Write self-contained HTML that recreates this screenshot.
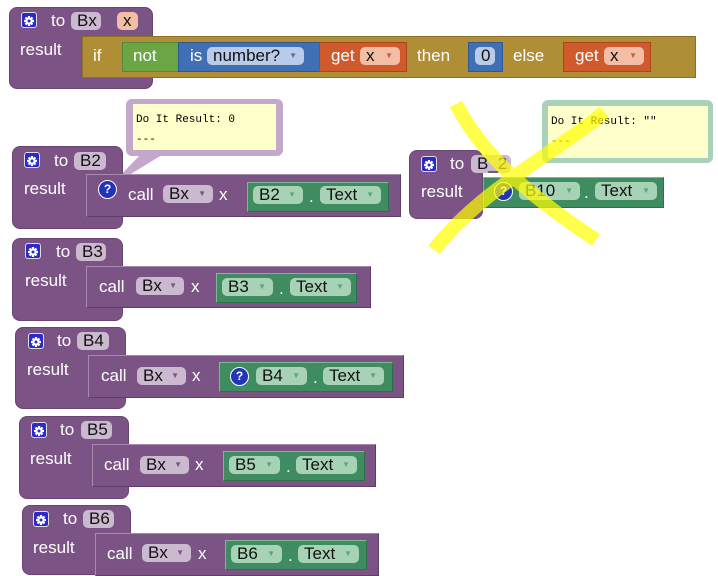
<!DOCTYPE html>
<html><head><meta charset="utf-8"><style>
body{margin:0;width:718px;height:562px;background:#fff;position:relative;overflow:hidden;font-family:"Liberation Sans",sans-serif;font-size:17px;color:#fff}
div{position:absolute;box-sizing:border-box}
.pu{background:#7c5385;border:1px solid #6a4574}
.pr{border-radius:8px}
.call{background:#7c5385;border:1px solid #a78aad;border-right-color:#5e3d66;border-bottom-color:#5e3d66}
.gr{background:#3f8c60;border:1px solid #2f6e4a;border-top-color:#7cb894;border-left-color:#7cb894}
.t{line-height:18px;white-space:nowrap}
.p{border-radius:5px;color:#111;line-height:18px;padding-left:6px;white-space:nowrap}
.pl{background:#cbb9cf}
.pg{background:#a8d2b6}
.po{background:#f2bea6}
.pb{background:#b8cbe8}
.ar{position:absolute;right:7px;top:0;font-size:8px;color:#5a7;line-height:18px}
.gear{width:16px;height:16px;background:#2b2bc9;border:1px solid #ddd;border-radius:3px}
.q{width:19px;height:19px;border-radius:50%;background:#2234b8;border:1px solid #fff;font-weight:bold;font-size:12px;text-align:center;line-height:17px}
.bub{background:#ffffcc;font-family:"Liberation Mono",monospace;font-size:11px;color:#000;padding:6px 3px;line-height:20px}
</style></head><body>
<svg width="0" height="0" style="position:absolute"><defs><g id="g"><circle cx="7" cy="7" r="3.6" fill="#fff"/><g stroke="#fff" stroke-width="2.2"><line x1="7" y1="2" x2="7" y2="12"/><line x1="2" y1="7" x2="12" y2="7"/><line x1="3.5" y1="3.5" x2="10.5" y2="10.5"/><line x1="10.5" y1="3.5" x2="3.5" y2="10.5"/></g><circle cx="7" cy="7" r="1.5" fill="#2b2bc9"/></g></defs></svg>

<!-- Block Bx -->
<div class="pu pr" style="left:9px;top:7px;width:144px;height:82px"></div>
<div class="gear" style="left:21px;top:12px"><svg width="14" height="14"><use href="#g"/></svg></div>
<div class="t" style="left:51px;top:12px">to</div>
<div class="p pl" style="left:71px;top:12px;width:30px">Bx</div>
<div class="p po" style="left:117px;top:12px;width:21px">x</div>
<div class="t" style="left:20px;top:41px">result</div>
<div style="left:82px;top:36px;width:614px;height:42px;background:#b08e36;border:1px solid #8d7028"></div>
<div class="t" style="left:93px;top:47px">if</div>
<div style="left:122px;top:42px;width:57px;height:30px;background:#6ba544;border:1px solid #55883a"></div>
<div class="t" style="left:133px;top:47px">not</div>
<div style="left:178px;top:42px;width:142px;height:30px;background:#416fb4;border:1px solid #2f5994"></div>
<div class="t" style="left:190px;top:47px">is</div>
<div class="p pb" style="left:207px;top:47px;width:97px">number?<span class="ar" style="color:#4a70b0">▼</span></div>
<div style="left:319px;top:42px;width:88px;height:30px;background:#d05a2b;border:1px solid #a9461f"></div>
<div class="t" style="left:331px;top:47px">get</div>
<div class="p po" style="left:360px;top:47px;width:40px">x<span class="ar" style="color:#d05a2b">▼</span></div>
<div class="t" style="left:417px;top:47px">then</div>
<div style="left:468px;top:42px;width:35px;height:30px;background:#416fb4;border:1px solid #2f5994"></div>
<div class="p pb" style="left:475px;top:47px;width:20px">0</div>
<div class="t" style="left:513px;top:47px">else</div>
<div style="left:563px;top:42px;width:88px;height:30px;background:#d05a2b;border:1px solid #a9461f"></div>
<div class="t" style="left:575px;top:47px">get</div>
<div class="p po" style="left:604px;top:47px;width:40px">x<span class="ar" style="color:#d05a2b">▼</span></div>

<!-- bubble B2 -->
<div style="left:126px;top:99px;width:157px;height:57px;background:#c4a8cc;border-radius:6px"></div>
<div class="bub" style="left:133px;top:104px;width:143px;height:46px">Do It Result: 0<br>---</div>
<svg style="position:absolute;left:100px;top:150px" width="70" height="45"><polygon points="45,0 70,0 8,38" fill="#c4a8cc"/></svg>

<!-- Block B2 -->
<div class="pu pr" style="left:12px;top:146px;width:111px;height:83px"></div>
<div class="gear" style="left:24px;top:152px"><svg width="14" height="14"><use href="#g"/></svg></div>
<div class="t" style="left:54px;top:152px">to</div>
<div class="p pl" style="left:74px;top:152px;width:32px">B2</div>
<div class="t" style="left:24px;top:180px">result</div>
<div class="call" style="left:86px;top:174px;width:315px;height:43px"></div>
<div class="q" style="left:98px;top:180px">?</div>
<div class="t" style="left:128px;top:186px">call</div>
<div class="p pl" style="left:163px;top:185px;width:50px">Bx<span class="ar" style="color:#7c5385">▼</span></div>
<div class="t" style="left:219px;top:186px">x</div>
<div class="gr" style="left:247px;top:182px;width:142px;height:30px"></div>
<div class="p pg" style="left:253px;top:186px;width:50px">B2<span class="ar">▼</span></div>
<div class="t" style="left:309px;top:188px">.</div>
<div class="p pg" style="left:320px;top:186px;width:61px">Text<span class="ar">▼</span></div>

<!-- bubble B_2 -->
<div style="left:542px;top:100px;width:171px;height:63px;background:#a9d2b8;border-radius:6px"></div>
<div class="bub" style="left:548px;top:106px;width:160px;height:52px">Do It Result: ""<br>---</div>

<!-- Block B_2 -->
<div class="pu pr" style="left:409px;top:150px;width:74px;height:69px"></div>
<div class="gear" style="left:421px;top:156px"><svg width="14" height="14"><use href="#g"/></svg></div>
<div class="t" style="left:450px;top:155px">to</div>
<div class="p pl" style="left:471px;top:155px;width:40px">B_2</div>
<div class="t" style="left:421px;top:183px">result</div>
<div class="gr" style="left:483px;top:177px;width:181px;height:31px"></div>
<div class="q" style="left:494px;top:182px">?</div>
<div class="p pg" style="left:519px;top:182px;width:61px">B10<span class="ar">▼</span></div>
<div class="t" style="left:584px;top:184px">.</div>
<div class="p pg" style="left:595px;top:182px;width:62px">Text<span class="ar">▼</span></div>

<!-- Block B3 -->
<div class="pu pr" style="left:12px;top:238px;width:111px;height:83px"></div>
<div class="gear" style="left:25px;top:243px"><svg width="14" height="14"><use href="#g"/></svg></div>
<div class="t" style="left:56px;top:243px">to</div>
<div class="p pl" style="left:76px;top:243px;width:30px">B3</div>
<div class="t" style="left:25px;top:272px">result</div>
<div class="call" style="left:86px;top:266px;width:285px;height:42px"></div>
<div class="t" style="left:99px;top:278px">call</div>
<div class="p pl" style="left:136px;top:277px;width:48px">Bx<span class="ar" style="color:#7c5385">▼</span></div>
<div class="t" style="left:191px;top:278px">x</div>
<div class="gr" style="left:216px;top:273px;width:141px;height:30px"></div>
<div class="p pg" style="left:222px;top:278px;width:51px">B3<span class="ar">▼</span></div>
<div class="t" style="left:279px;top:280px">.</div>
<div class="p pg" style="left:290px;top:278px;width:61px">Text<span class="ar">▼</span></div>

<!-- Block B4 -->
<div class="pu pr" style="left:15px;top:327px;width:111px;height:82px"></div>
<div class="gear" style="left:28px;top:333px"><svg width="14" height="14"><use href="#g"/></svg></div>
<div class="t" style="left:57px;top:332px">to</div>
<div class="p pl" style="left:77px;top:332px;width:32px">B4</div>
<div class="t" style="left:27px;top:361px">result</div>
<div class="call" style="left:88px;top:355px;width:316px;height:43px"></div>
<div class="t" style="left:101px;top:367px">call</div>
<div class="p pl" style="left:137px;top:367px;width:49px">Bx<span class="ar" style="color:#7c5385">▼</span></div>
<div class="t" style="left:192px;top:367px">x</div>
<div class="gr" style="left:219px;top:362px;width:174px;height:30px"></div>
<div class="q" style="left:230px;top:367px">?</div>
<div class="p pg" style="left:256px;top:367px;width:51px">B4<span class="ar">▼</span></div>
<div class="t" style="left:313px;top:369px">.</div>
<div class="p pg" style="left:323px;top:367px;width:61px">Text<span class="ar">▼</span></div>

<!-- Block B5 -->
<div class="pu pr" style="left:19px;top:416px;width:110px;height:83px"></div>
<div class="gear" style="left:31px;top:422px"><svg width="14" height="14"><use href="#g"/></svg></div>
<div class="t" style="left:60px;top:421px">to</div>
<div class="p pl" style="left:81px;top:421px;width:31px">B5</div>
<div class="t" style="left:30px;top:450px">result</div>
<div class="call" style="left:92px;top:444px;width:284px;height:43px"></div>
<div class="t" style="left:104px;top:456px">call</div>
<div class="p pl" style="left:140px;top:456px;width:49px">Bx<span class="ar" style="color:#7c5385">▼</span></div>
<div class="t" style="left:195px;top:456px">x</div>
<div class="gr" style="left:223px;top:451px;width:142px;height:30px"></div>
<div class="p pg" style="left:229px;top:456px;width:51px">B5<span class="ar">▼</span></div>
<div class="t" style="left:286px;top:458px">.</div>
<div class="p pg" style="left:296px;top:456px;width:61px">Text<span class="ar">▼</span></div>

<!-- Block B6 -->
<div class="pu pr" style="left:22px;top:505px;width:109px;height:70px"></div>
<div class="gear" style="left:33px;top:511px"><svg width="14" height="14"><use href="#g"/></svg></div>
<div class="t" style="left:63px;top:510px">to</div>
<div class="p pl" style="left:83px;top:510px;width:31px">B6</div>
<div class="t" style="left:33px;top:539px">result</div>
<div class="call" style="left:95px;top:533px;width:284px;height:43px"></div>
<div class="t" style="left:107px;top:545px">call</div>
<div class="p pl" style="left:142px;top:544px;width:49px">Bx<span class="ar" style="color:#7c5385">▼</span></div>
<div class="t" style="left:198px;top:545px">x</div>
<div class="gr" style="left:225px;top:540px;width:142px;height:30px"></div>
<div class="p pg" style="left:231px;top:545px;width:51px">B6<span class="ar">▼</span></div>
<div class="t" style="left:288px;top:547px">.</div>
<div class="p pg" style="left:298px;top:545px;width:61px">Text<span class="ar">▼</span></div>

<svg style="position:absolute;left:0;top:0" width="718" height="562"><g fill="none" stroke="#ffff00" stroke-width="14" opacity="0.7"><path d="M456,104 C480,150 520,190 596,240"/><path d="M604,112 C560,150 480,190 434,250"/></g></svg>
</body></html>
